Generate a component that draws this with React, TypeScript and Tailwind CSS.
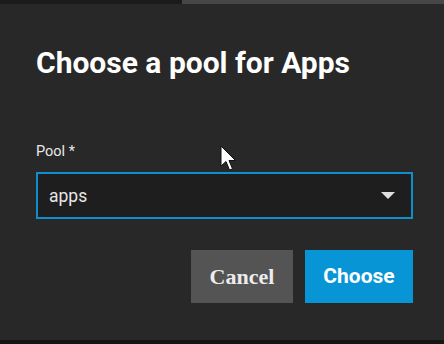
import React from 'react'

const App = () => {
    return (
        <div className="relative flex flex-col w-[444px] h-[344px] bg-[#282828] overflow-hidden" style={{ fontFamily: 'Roboto, "Liberation Sans", sans-serif' }}>
            <div className="flex w-full h-[4px] shrink-0">
                <div className="w-[182px] h-full bg-[#1b1b1b]" />
                <div className="flex-1 h-full bg-[#464646]" />
            </div>
            <div className="flex flex-col flex-1 px-[36px]">
                <h1 className="mt-[41px] text-[30px] leading-[36px] font-bold text-white">Choose a pool for Apps</h1>
                <div className="mt-[63px] flex flex-col">
                    <label className="text-[14.5px] leading-[16px] text-[#e8e8e8]">Pool *</label>
                    <div className="mt-[12px] flex items-center justify-between w-[377px] h-[47px] border-2 border-[#0f8ecd] bg-[#1e1e1e] pl-[11px] pr-[16px]">
                        <span className="text-[17.5px] leading-[20px] text-[#e6e6e6]">apps</span>
                        <svg width="14" height="8" viewBox="0 0 14 8">
                            <path d="M0 0 L14 0 L7 7 Z" fill="#e0e0e0" />
                        </svg>
                    </div>
                </div>
                <div className="mt-[31px] flex justify-end gap-[12px] w-[377px]">
                    <button className="w-[102px] h-[53px] bg-[#545454] text-[#ececec] text-[22px] font-bold" style={{ fontFamily: '"Liberation Serif", serif' }}>Cancel</button>
                    <button className="w-[108px] h-[53px] bg-[#0795d6] text-white text-[21px] font-bold">Choose</button>
                </div>
            </div>
            <div className="w-full h-[4px] shrink-0 bg-[#151515]" />
            {/* mouse pointer */}
            <svg className="absolute left-[220px] top-[145px]" width="18" height="28" viewBox="0 0 18 28">
                <path d="M1 1 L1 21 L6 16.5 L9.5 25 L12.5 23.8 L9 15.5 L15.5 15.5 Z" fill="#ffffff" stroke="#111111" strokeWidth="1" strokeLinejoin="round" />
            </svg>
        </div>
    )
}

export default App
